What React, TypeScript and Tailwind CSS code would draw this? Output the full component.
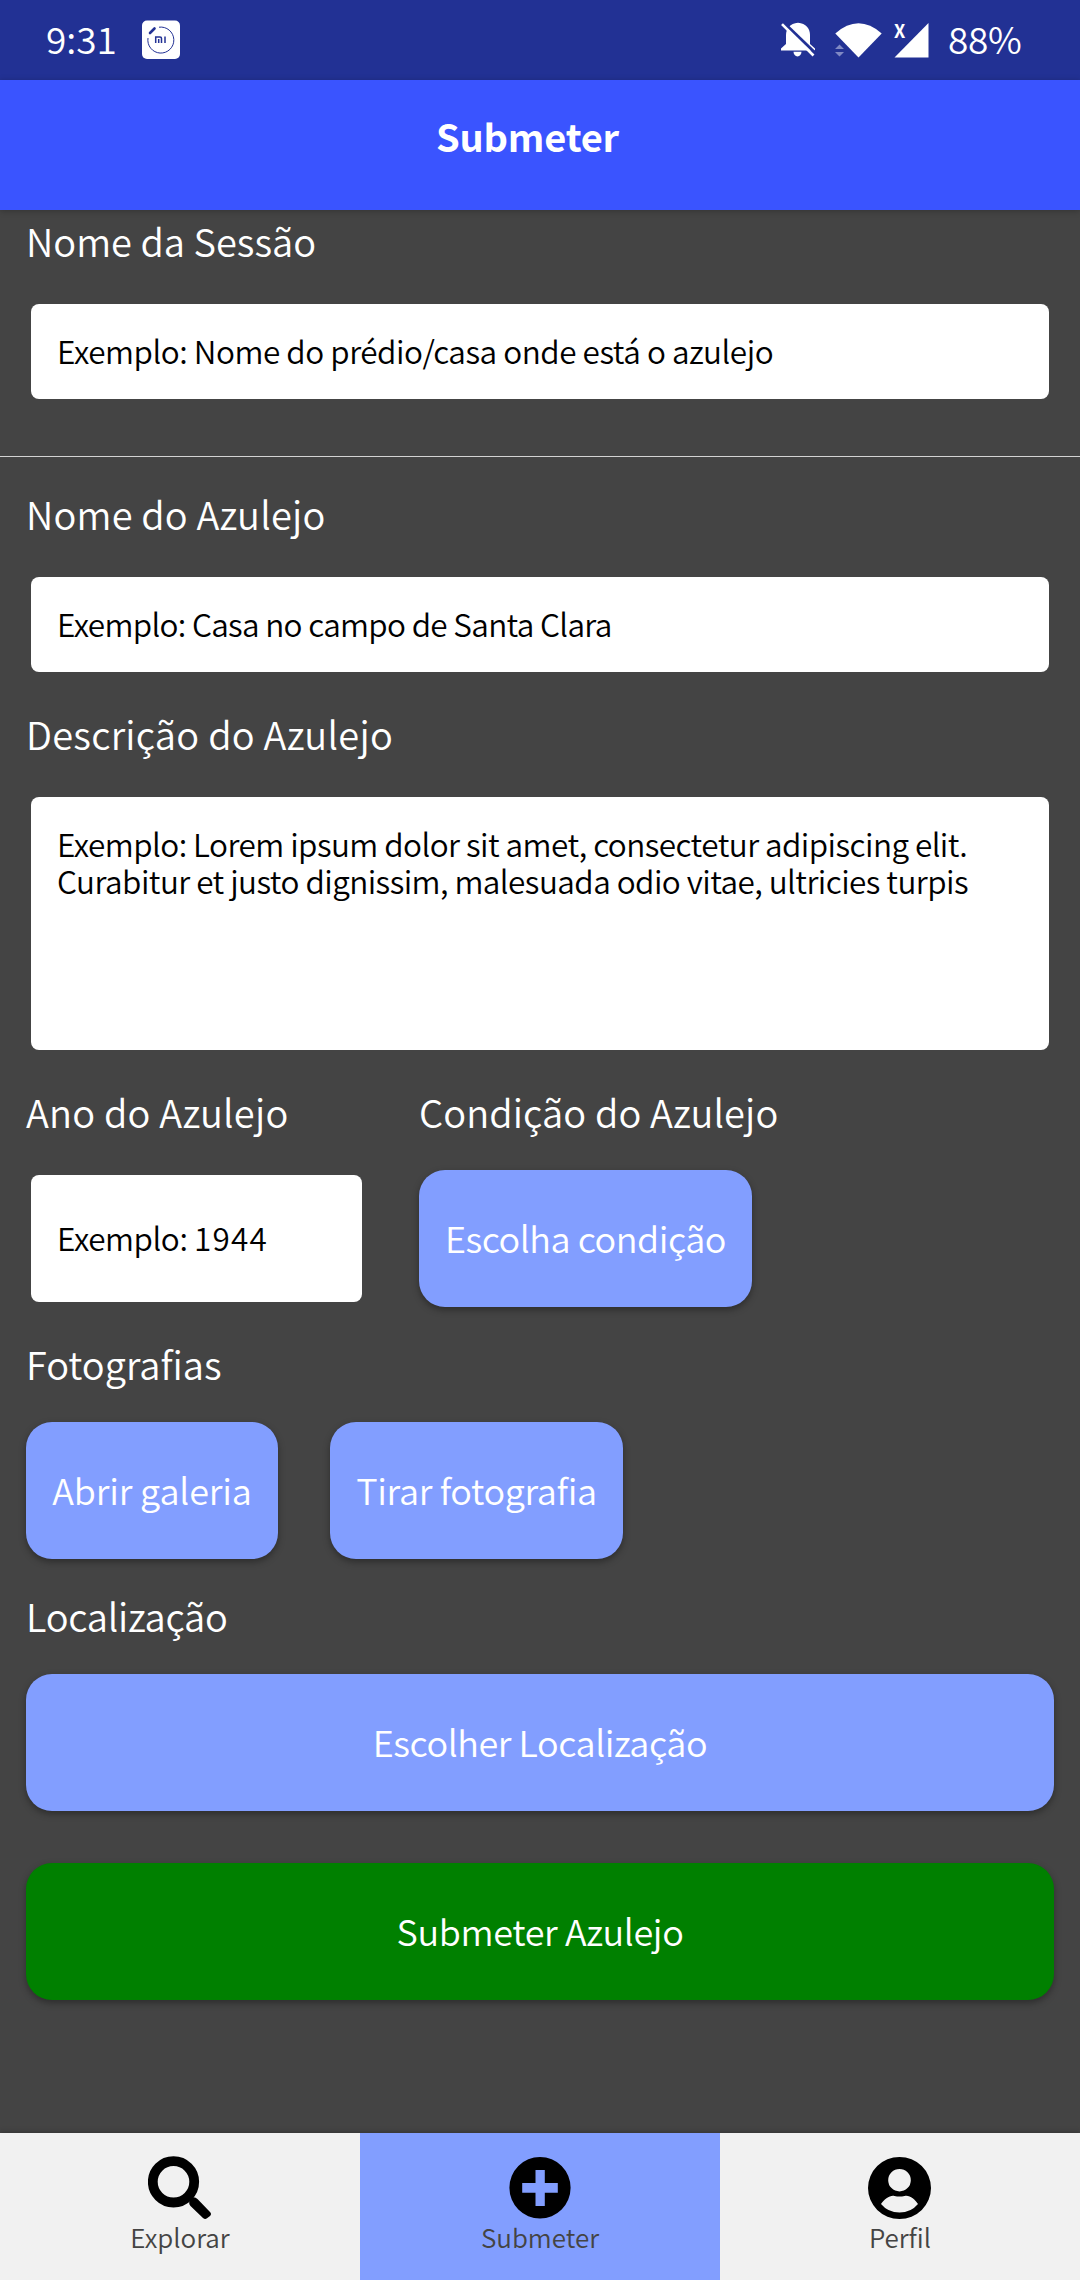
import type { ReactNode } from "react";

function Label({ children, className = "" }: { children: ReactNode; className?: string }) {
  return <div className={`h-[49px] whitespace-nowrap text-[38px] leading-[49px] ${className}`}>{children}</div>;
}

function Input({ children, className }: { children: ReactNode; className: string }) {
  return (
    <div
      className={`mx-[5px] mt-[39px] h-[95px] rounded-[8px] bg-white px-[26px] pt-[23px] text-[31.5px] leading-[46px] text-black whitespace-nowrap ${className}`}
    >
      {children}
    </div>
  );
}

function Button({ children, className }: { children: ReactNode; className: string }) {
  return (
    <button
      className={`flex h-[137px] items-start justify-center rounded-[26px] pt-[40px] text-[36px] leading-[54px] whitespace-nowrap shadow-[0_3px_7px_rgba(0,0,0,0.35)] ${className}`}
    >
      {children}
    </button>
  );
}

function StatusBar() {
  return (
    <div className="flex h-[80px] items-start bg-[#223194] text-[37px] leading-[54px]">
      <span className="ml-[46px] w-[96px] pt-[11px]">9:31</span>
      <svg className="mt-[20px] h-[40px] w-[40px]" viewBox="142 20 40 40">
        <rect x="142" y="20.500" width="38" height="38.500" rx="5" fill="#fff" />
        <path d="M159 27.200A13 13 0 1 1 148 38" fill="none" stroke="#223194" strokeWidth="1" />
        <path d="M150 33l4.500-4.500" stroke="#223194" strokeWidth="2.600" strokeLinecap="round" />
        <path d="M155.700 43v-6h4.300q1.500 0 1.500 1.500V43M158.700 39v4M165 36.500V43" fill="none" stroke="#223194" strokeWidth="1.500" />
      </svg>
      <svg className="ml-[598px] mt-[20px] h-[40px] w-[40px]" viewBox="780 20 40 40">
        <path d="M798 22.700c-8 .5-12 6-12 12.300V44l-5 4.500v2h34v-2l-5-4.500v-9c0-6.300-4-11.800-12-12.300z" fill="#fff" />
        <path d="M793.500 51.800h8a4 4.700 0 0 1-8 0z" fill="#fff" />
        <path d="M782 21L820 57.500" stroke="#223194" strokeWidth="3" />
        <path d="M782 24.200l31.500 31.300" stroke="#fff" strokeWidth="2.600" />
      </svg>
      <svg className="ml-[13px] mt-[20px] h-[40px] w-[50px]" viewBox="833 20 50 40">
        <path d="M835.300 33.500Q858.500 13.200 881.700 33.500L858.500 57.500z" fill="#fff" />
        <path d="M835 49l4.500-4.500L844 49zM835 52l4.500 4.500L844 52z" fill="#8089c4" />
      </svg>
      <div className="relative ml-[11px] mt-[20px] h-[40px] w-[36px]">
        <svg className="h-[40px] w-[36px]" viewBox="894 20 36 40">
          <path d="M928.500 23v34.500h-34z" fill="#fff" />
        </svg>
        <span className="absolute left-0 top-[-3px] text-[18px] font-bold leading-[26px]">X</span>
      </div>
      <span className="ml-[18px] pt-[11px] tracking-[-0.3px]">88%</span>
    </div>
  );
}

function SearchIcon() {
  return (
    <svg className="-ml-px h-[63px] w-[63px]" viewBox="0 0 63 63">
      <circle cx="25.500" cy="25.800" r="20.700" fill="none" stroke="#000" strokeWidth="9.800" />
      <path d="M41.500 45.500Q41 42 44 41.500Q47 40.500 49.500 43L62 56Q64 58 62 60L59 62.300Q57 63.800 55 62L42.500 50Q40.500 48 41.500 45.500z" />
    </svg>
  );
}

function PlusIcon() {
  return (
    <svg className="h-[63px] w-[63px]" viewBox="0 0 63 63">
      <path
        fillRule="evenodd"
        d="M31 1A30.600 30.800 0 1 0 31 62.600A30.600 30.800 0 1 0 31 1zM26.500 14h9.300v13h13v9.700h-13v13.300h-9.300v-13.300h-13.300v-9.700h13.300z"
      />
    </svg>
  );
}

function ProfileIcon() {
  return (
    <svg className="-ml-px h-[63px] w-[63px]" viewBox="0 0 63 63">
      <path
        fillRule="evenodd"
        d="M31.500 1A31.500 31 0 1 0 31.500 63A31.500 31 0 1 0 31.500 1zM31.500 13A11.300 11.200 0 1 1 31.500 35.400A11.300 11.200 0 1 1 31.500 13zM13 48C16 43 23 38.500 26.500 40Q31.500 41 36.500 40C41 38.500 47 43 50 48Q43 56.500 31.500 56.500T13 48z"
      />
    </svg>
  );
}

function Tab({ icon, label, active }: { icon: ReactNode; label: string; active?: boolean }) {
  return (
    <div className={`flex h-full w-[360px] flex-col items-center pt-[23px] ${active ? "bg-[#829eff]" : "bg-[#f1f1f1]"}`}>
      {icon}
      <span className="-mt-px text-[26px] leading-[38px] text-[#444]">{label}</span>
    </div>
  );
}

export default function App() {
  return (
    <div className="flex h-[2280px] w-[1080px] flex-col bg-[#444] font-['Noto_Sans_CJK_SC',sans-serif] font-[350] text-white">
      <StatusBar />
      <header className="h-[130px] bg-[#3a54ff] pl-[436px] pt-[28px] text-[38px] font-bold leading-[55px] tracking-[-0.2px] shadow-[0_1px_6px_rgba(0,0,0,0.25)]">
        Submeter
      </header>
      <main className="flex h-[1923px] flex-col">
        <section className="h-[246px] px-[26px] pt-[6px]">
          <Label>Nome da Sessão</Label>
          <Input className="tracking-[-0.47px]">Exemplo: Nome do prédio/casa onde está o azulejo</Input>
        </section>
        <div className="h-px bg-[#d3d3d3]" />
        <section className="px-[26px] pt-[32px]">
          <Label className="tracking-[0.17px]">Nome do Azulejo</Label>
          <Input className="tracking-[-0.68px]">Exemplo: Casa no campo de Santa Clara</Input>
          <Label className="mt-[37px] tracking-[0.25px]">Descrição do Azulejo</Label>
          <div className="mx-[5px] mt-[39px] h-[253px] rounded-[8px] bg-white pl-[26px] pt-[28px] text-[31.5px] leading-[37px] tracking-[-0.55px] text-black whitespace-nowrap">
            Exemplo: Lorem ipsum dolor sit amet, consectetur adipiscing elit.
            <br />
            Curabitur et justo dignissim, malesuada odio vitae, ultricies turpis
          </div>
          <div className="mt-[37px] flex">
            <div className="w-[393px]">
              <Label className="tracking-[0.2px]">Ano do Azulejo</Label>
              <div className="ml-[5px] mt-[39px] h-[127px] w-[331px] rounded-[8px] bg-white pl-[26px] pt-[39px] text-[31.5px] leading-[46px] tracking-[-0.45px] text-black">
                Exemplo: <span className="tracking-[1.2px]">1944</span>
              </div>
            </div>
            <div>
              <Label className="tracking-[0.11px]">Condição do Azulejo</Label>
              <Button className="mt-[34px] w-[333px] bg-[#829eff] tracking-[-0.49px]">Escolha condição</Button>
            </div>
          </div>
          <Label className="mt-[32px]">Fotografias</Label>
          <div className="mt-[34px] flex gap-[52px]">
            <Button className="w-[252px] bg-[#829eff] tracking-[-0.16px]">Abrir galeria</Button>
            <Button className="w-[293px] bg-[#829eff] tracking-[-0.35px]">Tirar fotografia</Button>
          </div>
          <Label className="mt-[32px] tracking-[-0.27px]">Localização</Label>
          <Button className="mt-[34px] w-full bg-[#829eff] tracking-[-0.46px]">Escolher Localização</Button>
          <Button className="mt-[52px] w-full bg-[#008000] tracking-[-0.36px]">Submeter Azulejo</Button>
        </section>
      </main>
      <nav className="flex h-[147px] shadow-[0_-1px_5px_rgba(0,0,0,0.25)]">
        <Tab icon={<SearchIcon />} label="Explorar" />
        <Tab icon={<PlusIcon />} label="Submeter" active />
        <Tab icon={<ProfileIcon />} label="Perfil" />
      </nav>
    </div>
  );
}
